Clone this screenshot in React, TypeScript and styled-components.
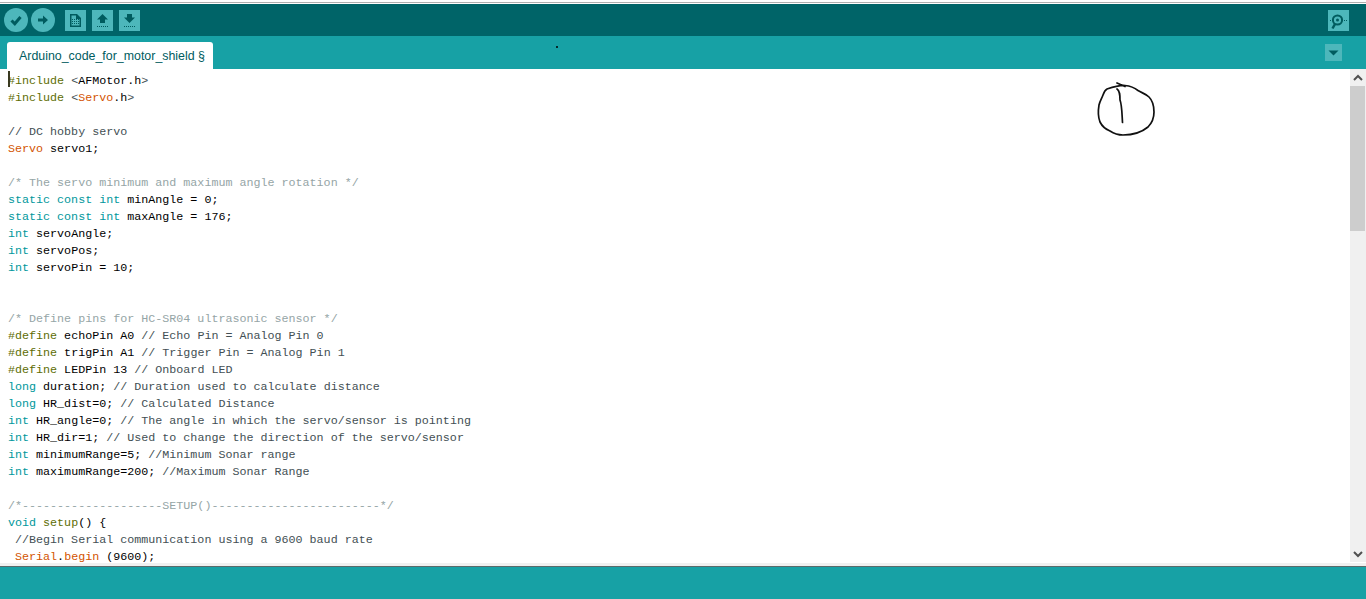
import React from "react";
import styled, {createGlobalStyle} from "styled-components";

const GlobalStyle = createGlobalStyle`
  html, body {
    margin: 0;
    padding: 0;
    background: #fff;
    overflow: hidden;
  }
`

type Kind = "k" | "t" | "f" | "c" | "l" | "p" | "n"
type Token = [Kind, string]

const code: Token[][] = [
    [["p", "#include"], ["n", " "], ["l", "<"], ["n", "AFMotor.h"], ["l", ">"]],
    [["p", "#include"], ["n", " "], ["l", "<"], ["t", "Servo"], ["n", ".h"], ["l", ">"]],
    [],
    [["l", "// DC hobby servo"]],
    [["t", "Servo"], ["n", " servo1;"]],
    [],
    [["c", "/* The servo minimum and maximum angle rotation */"]],
    [["k", "static const int"], ["n", " minAngle = 0;"]],
    [["k", "static const int"], ["n", " maxAngle = 176;"]],
    [["k", "int"], ["n", " servoAngle;"]],
    [["k", "int"], ["n", " servoPos;"]],
    [["k", "int"], ["n", " servoPin = 10;"]],
    [],
    [],
    [["c", "/* Define pins for HC-SR04 ultrasonic sensor */"]],
    [["p", "#define"], ["n", " echoPin A0 "], ["l", "// Echo Pin = Analog Pin 0"]],
    [["p", "#define"], ["n", " trigPin A1 "], ["l", "// Trigger Pin = Analog Pin 1"]],
    [["p", "#define"], ["n", " LEDPin 13 "], ["l", "// Onboard LED"]],
    [["k", "long"], ["n", " duration; "], ["l", "// Duration used to calculate distance"]],
    [["k", "long"], ["n", " HR_dist=0; "], ["l", "// Calculated Distance"]],
    [["k", "int"], ["n", " HR_angle=0; "], ["l", "// The angle in which the servo/sensor is pointing"]],
    [["k", "int"], ["n", " HR_dir=1; "], ["l", "// Used to change the direction of the servo/sensor"]],
    [["k", "int"], ["n", " minimumRange=5; "], ["l", "//Minimum Sonar range"]],
    [["k", "int"], ["n", " maximumRange=200; "], ["l", "//Maximum Sonar Range"]],
    [],
    [["c", "/*--------------------SETUP()------------------------*/"]],
    [["k", "void"], ["n", " "], ["f", "setup"], ["n", "() {"]],
    [["n", " "], ["l", "//Begin Serial communication using a 9600 baud rate"]],
    [["n", " "], ["t", "Serial"], ["n", "."], ["t", "begin"], ["n", " (9600);"]],
]

const kindColors: Record<Kind, string> = {
    k: "#00979c",
    t: "#d35400",
    f: "#5e6d03",
    c: "#95a5a6",
    l: "#434f54",
    p: "#5e6d03",
    n: "#000000",
}

const App = () => {
    return (
        <Page>
            <GlobalStyle/>
            <TopEdge/>
            <Toolbar>
                <RoundButton>
                    <svg width="24" height="24" viewBox="0 0 24 24">
                        <path d="M7.5 12.5 L10.8 15.8 L16.5 9" fill="none" stroke="#005c5f" strokeWidth="3"/>
                    </svg>
                </RoundButton>
                <RoundButton>
                    <svg width="24" height="24" viewBox="0 0 24 24">
                        <path d="M7 10.5 H12 V7.5 L17 12 L12 16.5 V13.5 H7 Z" fill="#005c5f"/>
                    </svg>
                </RoundButton>
                <FileButtons>
                    <SquareButton>
                        <svg width="21" height="21" viewBox="0 0 21 21">
                            <path d="M5 4 H12 L16 8 V17 H5 Z M6.5 5.5 V15.5 H14.5 V9 H11 V5.5 Z" fill="#005c5f" fillRule="evenodd"/>
                            <path d="M7 9.5 H14 M7 11.5 H14 M7 13.5 H14" stroke="#005c5f" strokeWidth="1" strokeDasharray="1 1"/>
                        </svg>
                    </SquareButton>
                    <SquareButton>
                        <svg width="21" height="21" viewBox="0 0 21 21">
                            <path d="M10.5 4 L16 9.5 H13 V13 H8 V9.5 H5 Z" fill="#005c5f"/>
                            <path d="M5 16.5 H16" stroke="#005c5f" strokeWidth="1" strokeDasharray="1 1"/>
                        </svg>
                    </SquareButton>
                    <SquareButton>
                        <svg width="21" height="21" viewBox="0 0 21 21">
                            <path d="M8 4 H13 V7.5 H16 L10.5 13 L5 7.5 H8 Z" fill="#005c5f"/>
                            <path d="M5 16.5 H16" stroke="#005c5f" strokeWidth="1" strokeDasharray="1 1"/>
                        </svg>
                    </SquareButton>
                </FileButtons>
                <SerialButton>
                    <svg width="21" height="21" viewBox="0 0 21 21">
                        <circle cx="9.5" cy="10" r="4.6" fill="none" stroke="#005c5f" strokeWidth="2"/>
                        <circle cx="9.5" cy="10" r="1.5" fill="#005c5f"/>
                        <path d="M7 14 L4.5 18.5" stroke="#005c5f" strokeWidth="2.5"/>
                        <path d="M2 10.5 H3 M16 10.5 H17 M18 10.5 H19" stroke="#005c5f" strokeWidth="1"/>
                    </svg>
                </SerialButton>
            </Toolbar>
            <TabBar>
                <Tab>Arduino_code_for_motor_shield §</Tab>
                <StrayDot/>
                <TabMenu>
                    <svg width="17" height="17" viewBox="0 0 17 17">
                        <path d="M3.5 6.5 H13.5 L8.5 11.5 Z" fill="#005c5f"/>
                    </svg>
                </TabMenu>
            </TabBar>
            <EditorArea>
                <Code>
                    <Caret/>
                    {code.map((line, i) => (
                        <Line key={i}>
                            {line.map(([kind, text], j) => <Tok key={j} $kind={kind}>{text}</Tok>)}
                        </Line>
                    ))}
                    <Scribble width="100" height="80" viewBox="0 0 100 80">
                        <path
                            d="M37 13 L45 16.5 M27 19 C33 17 40 15 45 15.5 C50 16 53 16.5 58 20.5 C62 23 66 24 69 27 C73 31 74 36 74 42 C74 49 72 53 68 57 C62 62 52 65 43 65 C38 65 33 63 30 61 C25 59 22 56 20 52 C18 47 18 41 19 35 C20 31 22 28 23 25 C24 22 25 20 27 19 Z M37 19 C40 21 40 25 40 30 C42 35 42 45 42.5 52.5"
                            fill="none"
                            stroke="#111"
                            strokeWidth="1.7"
                            strokeLinecap="round"
                            strokeLinejoin="round"
                        />
                    </Scribble>
                </Code>
                <ScrollBar>
                    <ScrollArrow>
                        <svg width="12" height="12" viewBox="0 0 12 12">
                            <path d="M2 8 L6 4 L10 8" fill="none" stroke="#505050" strokeWidth="2"/>
                        </svg>
                    </ScrollArrow>
                    <ScrollTrack>
                        <ScrollThumb/>
                    </ScrollTrack>
                    <ScrollArrow>
                        <svg width="12" height="12" viewBox="0 0 12 12">
                            <path d="M2 4 L6 8 L10 4" fill="none" stroke="#505050" strokeWidth="2"/>
                        </svg>
                    </ScrollArrow>
                </ScrollBar>
            </EditorArea>
            <Divider/>
            <StatusBar/>
        </Page>
    )
}

export default App;

// Styled Components
const Page = styled.div`
  width: 1366px;
  height: 599px;
  display: flex;
  flex-direction: column;
  overflow: hidden;
  background: #fff;
`
const TopEdge = styled.div`
  flex: none;
  height: 1px;
  margin: 2px 0 1px;
  background: #b0b0b0;
`
const Toolbar = styled.div`
  height: 32px;
  flex: none;
  display: flex;
  align-items: center;
  background: #006468;
  padding: 0 4px;
`
const RoundButton = styled.div`
  width: 24px;
  height: 24px;
  margin-right: 3px;
  border-radius: 50%;
  background: #4db7bb;
`
const FileButtons = styled.div`
  display: flex;
  gap: 6px;
  margin-left: 7px;
  margin-top: 1px;
`
const SquareButton = styled.div`
  width: 21px;
  height: 21px;
  background: #4db7bb;
`
const SerialButton = styled(SquareButton)`
  margin-left: auto;
  margin-right: 13px;
  margin-top: 1px;
`
const TabBar = styled.div`
  position: relative;
  height: 33px;
  flex: none;
  display: flex;
  align-items: flex-end;
  padding-left: 7px;
  background: #17a1a5;
`
const Tab = styled.div`
  width: 206px;
  height: 27px;
  box-sizing: border-box;
  padding: 6px 0 0 12px;
  border-radius: 3px 3px 0 0;
  background: #fff;
  color: #005c5f;
  font: 12.4px/16px "Liberation Sans", Arial, sans-serif;
  white-space: nowrap;
`
const StrayDot = styled.div`
  position: absolute;
  left: 556px;
  top: 10px;
  width: 2px;
  height: 2px;
  background: #06282a;
`
const TabMenu = styled.div`
  width: 17px;
  height: 17px;
  margin-left: auto;
  margin-right: 24px;
  margin-bottom: 8px;
  background: #4db7bb;
`
const EditorArea = styled.div`
  flex: none;
  height: 494px;
  display: flex;
  overflow: hidden;
`
const Code = styled.div`
  position: relative;
  flex: 1;
  padding: 4px 0 0 8px;
  overflow: hidden;
  background: #fff;
`
const Line = styled.div`
  height: 17px;
  font: 11.7px/17px "Liberation Mono", "Courier New", monospace;
  white-space: pre;
  color: #000;
`
const Tok = styled.span<{$kind: Kind}>`
  color: ${p => kindColors[p.$kind]};
`
const Caret = styled.div`
  position: absolute;
  left: 8px;
  top: 2px;
  width: 2px;
  height: 16px;
  background: #3a3a20;
`
const Scribble = styled.svg`
  position: absolute;
  left: 1080px;
  top: 1px;
`
const ScrollBar = styled.div`
  width: 16px;
  flex: none;
  display: flex;
  flex-direction: column;
  margin-bottom: 1px;
  background: #f0f0f0;
`
const ScrollArrow = styled.div`
  height: 17px;
  flex: none;
  display: flex;
  align-items: center;
  justify-content: center;
`
const ScrollTrack = styled.div`
  flex: 1;
`
const ScrollThumb = styled.div`
  height: 145px;
  margin-right: 1px;
  background: #cdcdcd;
`
const Divider = styled.div`
  height: 4px;
  flex: none;
  background: #f0f0f0;
  border-bottom: 1px solid #5a6a6a;
  box-sizing: border-box;
`
const StatusBar = styled.div`
  flex: 1;
  background: #17a1a5;
`
